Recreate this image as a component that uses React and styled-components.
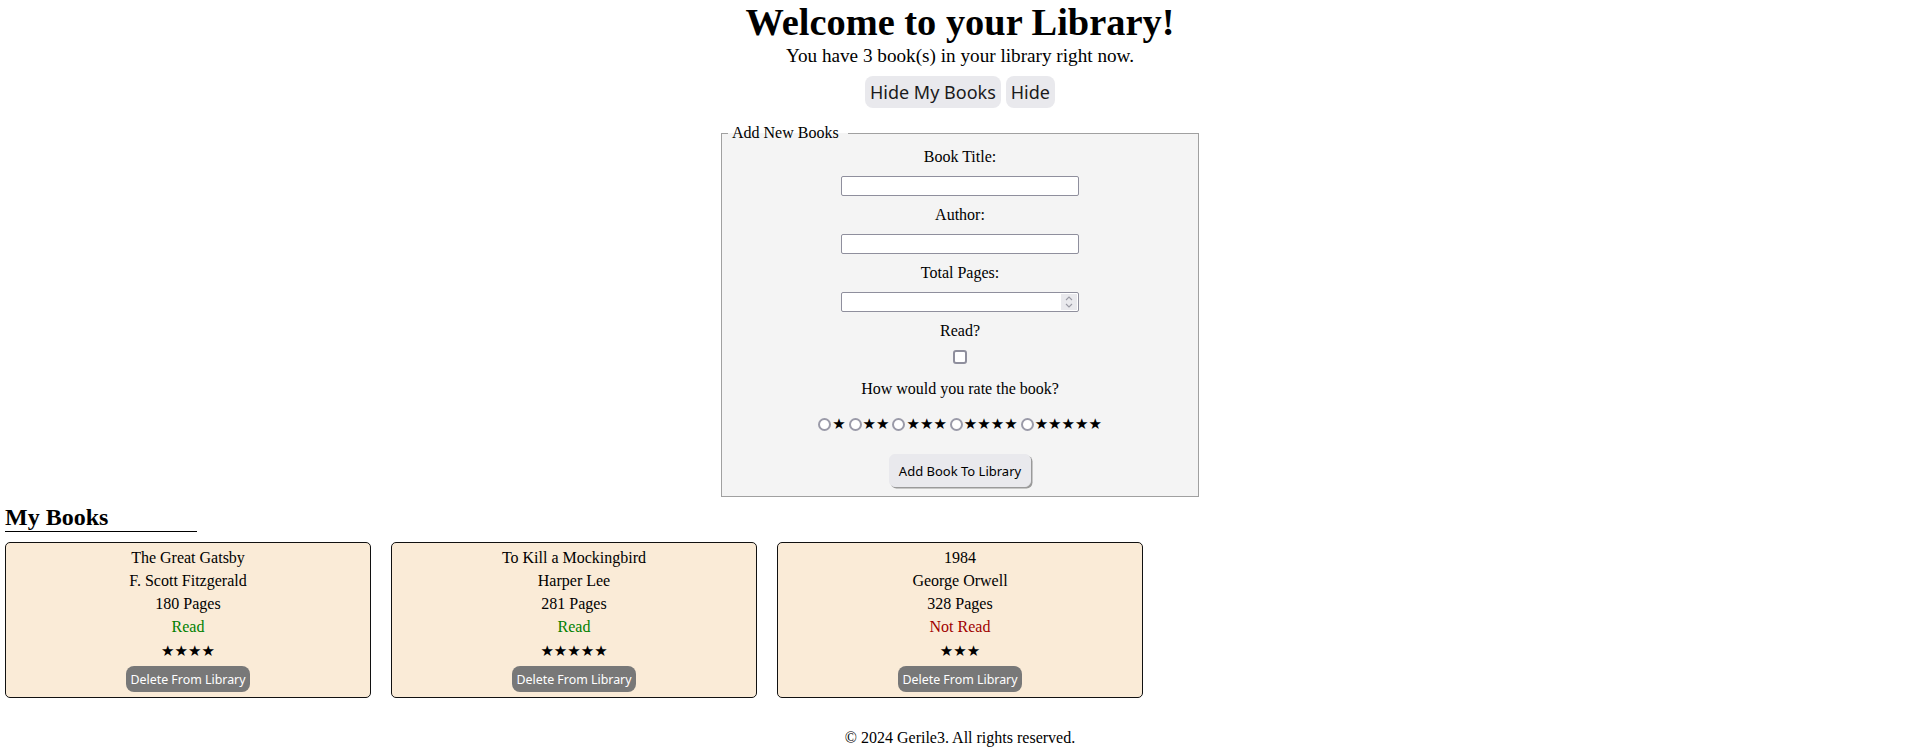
import styled, { createGlobalStyle } from "styled-components";

const GlobalStyle = createGlobalStyle`
  body {
    margin: 0;
    background: #fff;
    color: #000;
    font-family: "Liberation Serif", "Times New Roman", serif;
    font-size: 16px;
  }
`;

const books = [
  { title: "The Great Gatsby", author: "F. Scott Fitzgerald", pages: 180, read: true, rating: 4 },
  { title: "To Kill a Mockingbird", author: "Harper Lee", pages: 281, read: true, rating: 5 },
  { title: "1984", author: "George Orwell", pages: 328, read: false, rating: 3 },
];

const Page = styled.div`
  display: flex;
  flex-direction: column;
`;

const Header = styled.header`
  display: flex;
  flex-direction: column;
  align-items: center;
  text-align: center;
`;

const Title = styled.h1`
  margin: 0;
  font-size: 38.4px;
  line-height: 44px;
  font-weight: bold;
`;

const Subtitle = styled.p`
  margin: 1px 0 0;
  font-size: 19.2px;
  line-height: 22px;
`;

const ButtonRow = styled.div`
  display: flex;
  gap: 5px;
  margin-top: 9px;
`;

const ToggleButton = styled.button`
  font-family: "Noto Sans", "Open Sans", sans-serif;
  font-size: 18px;
  height: 32px;
  padding: 0 5px;
  border: none;
  border-radius: 8px;
  background: #e9e9ed;
  color: #1b1b1b;
  cursor: pointer;
`;

const Form = styled.form`
  display: flex;
  justify-content: center;
  margin-top: 16px;
`;

const Fieldset = styled.fieldset`
  width: 478px;
  box-sizing: border-box;
  margin: 0;
  padding: 6px 0 9px;
  border: 1.5px solid #a0a0a0;
  background: #f4f4f4;
  display: flex;
  flex-direction: column;
  align-items: center;
  gap: 10px;
`;

const Legend = styled.legend`
  margin-left: 6px;
  padding: 0 9px 0 4px;
  line-height: 18px;
`;

const Label = styled.label`
  line-height: 18px;
  margin-top: ${(p) => p.$offset || 0}px;
`;

const TextInput = styled.input`
  width: 238px;
  height: 20px;
  box-sizing: border-box;
  border: 1px solid #8f8f9d;
  border-radius: 2px;
  background: #fff;
  padding: 0 4px;
  font-size: 13px;
`;

const NumberBox = styled.div`
  width: 238px;
  height: 20px;
  box-sizing: border-box;
  border: 1px solid #8f8f9d;
  border-radius: 2px;
  background: #fff;
  display: flex;
  align-items: stretch;
`;

const NumberInput = styled.input`
  flex: 1;
  min-width: 0;
  border: none;
  outline: none;
  padding: 0 4px;
  background: transparent;
  font-size: 13px;
  appearance: textfield;
  &::-webkit-inner-spin-button,
  &::-webkit-outer-spin-button {
    -webkit-appearance: none;
    margin: 0;
  }
`;

const Spinner = styled.span`
  width: 16px;
  margin: 1px 1px 1px 0;
  background: #e9e9ed;
  display: flex;
  align-items: center;
  justify-content: center;
`;

const Checkbox = styled.input`
  appearance: none;
  box-sizing: border-box;
  width: 14px;
  height: 14px;
  margin: 0;
  border: 2px solid #8f8f9d;
  border-radius: 3px;
  background: #fff;
`;

const RadioRow = styled.div`
  display: flex;
  gap: 3px;
  align-items: center;
  margin-top: 7px;
  line-height: 18px;
`;

const RadioOption = styled.label`
  display: flex;
  align-items: center;
  gap: 0;
`;

const Radio = styled.input`
  appearance: none;
  width: 13px;
  height: 13px;
  margin: 0 1px 0 0;
  border: 2px solid #9a9aa8;
  border-radius: 50%;
  background: #fff;
  box-sizing: border-box;
`;

const Stars = styled.span`
  font-family: "DejaVu Sans", sans-serif;
  font-size: 15px;
`;

const AddButton = styled.button`
  margin-top: 11px;
  width: 142px;
  height: 33px;
  font-family: "Noto Sans", "Open Sans", sans-serif;
  font-size: 13px;
  color: #000;
  background: #e9e9ed;
  border: 1px solid #e9e9ed;
  border-radius: 6px;
  box-shadow: 1.5px 1.5px 0 #9a9a9a;
  cursor: pointer;
`;

const BookSection = styled.section`
  padding: 0 5px;
  margin-top: 6px;
`;

const SectionTitle = styled.h2`
  width: 192px;
  margin: 0;
  font-size: 24px;
  line-height: 28px;
  border-bottom: 1.5px solid #000;
`;

const CardGrid = styled.div`
  display: flex;
  gap: 20px;
  margin-top: 10px;
`;

const Card = styled.div`
  width: 366px;
  box-sizing: border-box;
  background: #faebd7;
  border: 1px solid #111;
  border-radius: 5px;
  display: flex;
  flex-direction: column;
  align-items: center;
  text-align: center;
  padding-top: 1px;
`;

const CardLine = styled.p`
  margin: ${(p) => p.$gap || 5}px 0 0;
  line-height: 18px;
  color: ${(p) => p.$color || "#000"};
`;

const DeleteButton = styled.button`
  margin: 6px 0 5px;
  height: 26px;
  padding: 0 4px;
  font-family: "Noto Sans", "Open Sans", sans-serif;
  font-size: 12.4px;
  color: #fff;
  background: #787878;
  border: none;
  border-radius: 8px;
  cursor: pointer;
`;

const Footer = styled.footer`
  text-align: center;
  margin-top: 31px;
  line-height: 18px;
`;

function SpinIcon() {
  return (
    <svg width="8" height="14" viewBox="0 0 8 14" fill="none" stroke="#9a9aa4" strokeWidth="1.1">
      <path d="M1 5 L4 2 L7 5" />
      <path d="M1 9 L4 12 L7 9" />
    </svg>
  );
}

export default function App() {
  return (
    <Page>
      <GlobalStyle />
      <Header>
        <Title>Welcome to your Library!</Title>
        <Subtitle>You have {books.length} book(s) in your library right now.</Subtitle>
        <ButtonRow>
          <ToggleButton type="button">Hide My Books</ToggleButton>
          <ToggleButton type="button">Hide</ToggleButton>
        </ButtonRow>
      </Header>

      <Form onSubmit={(e) => e.preventDefault()}>
        <Fieldset>
          <Legend>Add New Books</Legend>
          <Label htmlFor="title">Book Title:</Label>
          <TextInput id="title" type="text" />
          <Label htmlFor="author">Author:</Label>
          <TextInput id="author" type="text" />
          <Label htmlFor="pages">Total Pages:</Label>
          <NumberBox>
            <NumberInput id="pages" type="number" />
            <Spinner>
              <SpinIcon />
            </Spinner>
          </NumberBox>
          <Label htmlFor="read">Read?</Label>
          <Checkbox id="read" type="checkbox" />
          <Label $offset={6}>How would you rate the book?</Label>
          <RadioRow>
            {[1, 2, 3, 4, 5].map((n) => (
              <RadioOption key={n}>
                <Radio type="radio" name="rating" value={n} />
                <Stars>{"★".repeat(n)}</Stars>
              </RadioOption>
            ))}
          </RadioRow>
          <AddButton type="submit">Add Book To Library</AddButton>
        </Fieldset>
      </Form>

      <BookSection>
        <SectionTitle>My Books</SectionTitle>
        <CardGrid>
          {books.map((b) => (
            <Card key={b.title}>
              <CardLine>{b.title}</CardLine>
              <CardLine>{b.author}</CardLine>
              <CardLine>{b.pages} Pages</CardLine>
              <CardLine $color={b.read ? "#008000" : "#a00000"}>{b.read ? "Read" : "Not Read"}</CardLine>
              <CardLine $gap={6}>
                <Stars>{"★".repeat(b.rating)}</Stars>
              </CardLine>
              <DeleteButton type="button">Delete From Library</DeleteButton>
            </Card>
          ))}
        </CardGrid>
      </BookSection>

      <Footer>© 2024 Gerile3. All rights reserved.</Footer>
    </Page>
  );
}
